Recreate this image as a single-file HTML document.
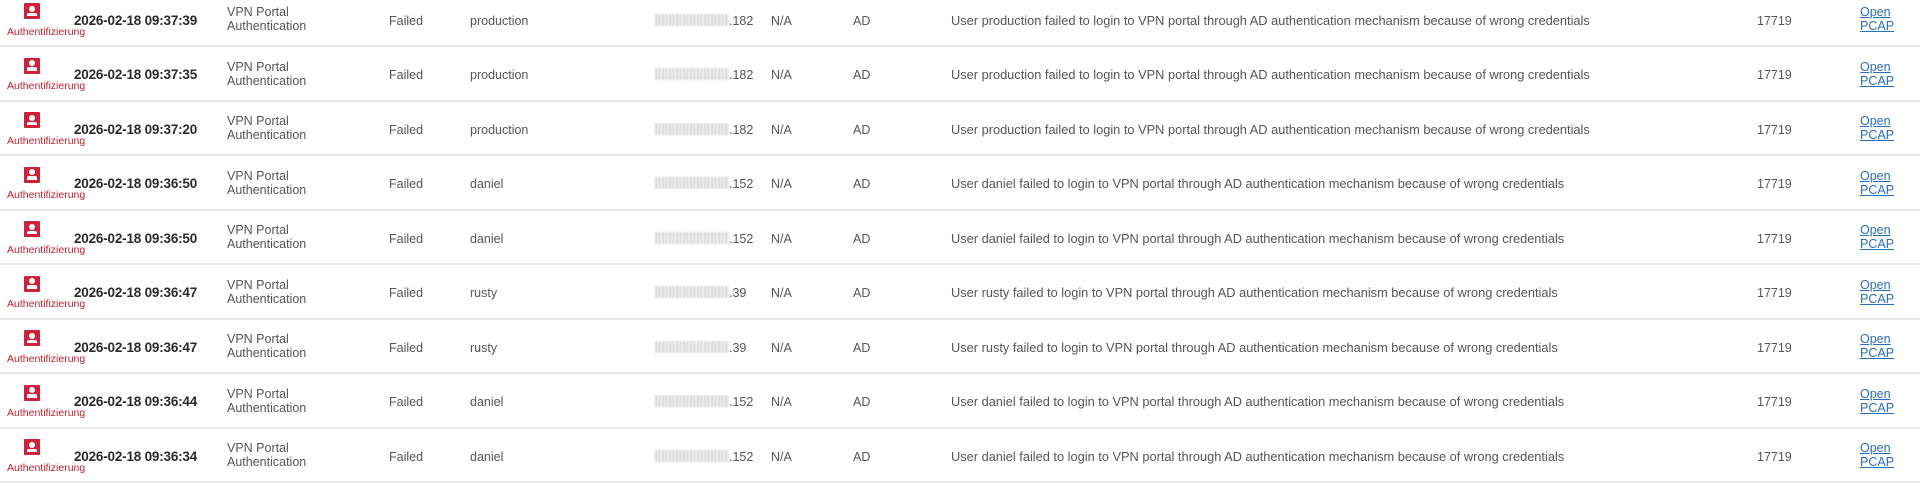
<!DOCTYPE html>
<html><head><meta charset="utf-8"><style>
body{margin:0;width:1920px;height:477px;overflow:hidden;background:#fff;font-family:"Liberation Sans",sans-serif;position:relative}
.r{position:absolute;left:0;width:1920px;height:54.5px;border-bottom:2px solid #e9e9e9;box-sizing:border-box}
.r>*{position:absolute;white-space:nowrap}
.ic{left:24px;top:10.5px;width:16px;height:16px;background:#d0213a;border-radius:1px}
.ic::before{content:"";position:absolute;left:5px;top:2.5px;width:6px;height:6px;border-radius:50%;background:#fff}
.ic::after{content:"";position:absolute;left:3px;top:9.5px;width:10px;height:3.5px;background:#fff;border-radius:2px 2px 0 0}
.au{left:7px;top:33px;font-size:10.5px;color:#c8202f}
.dt{left:74px;top:20px;font-size:13.5px;color:#2a2a2a;font-weight:bold;letter-spacing:-0.2px}
.t{font-size:12.5px;color:#555;top:21px}
.m{font-size:12.8px;top:20px}
.vp{left:227px;top:12.5px;font-size:12.5px;color:#555;line-height:14px}
.ip{left:655px;top:21px;font-size:12.5px;color:#555}
.bl{display:inline-block;width:74px;height:12px;vertical-align:-1px;background:repeating-linear-gradient(90deg,#d8d8d8 0 2px,#eee 2px 4px,#c9c9c9 4px 5px,#f2f2f2 5px 7px);filter:blur(0.8px)}
.lk{left:1860px;top:12.5px;font-size:12.5px;color:#2a6ebb;text-decoration:underline;line-height:14px}
</style></head><body>
<div id="c"></div>
<script>
var d=[["09:37:39","production","182"],["09:37:35","production","182"],["09:37:20","production","182"],["09:36:50","daniel","152"],["09:36:50","daniel","152"],["09:36:47","rusty","39"],["09:36:47","rusty","39"],["09:36:44","daniel","152"],["09:36:34","daniel","152"]];
var h="";
d.forEach(function(x,i){
h+='<div class="r" style="top:'+(-7.5+54.5*i)+'px"><div class="ic"></div><div class="au">Authentifizierung</div><div class="dt">2026-02-18 '+x[0]+'</div><div class="vp">VPN Portal<br>Authentication</div><div class="t" style="left:389px">Failed</div><div class="t" style="left:470px">'+x[1]+'</div><div class="ip"><span class="bl"></span>.'+x[2]+'</div><div class="t" style="left:771px">N/A</div><div class="t" style="left:853px">AD</div><div class="t m" style="left:951px">User '+x[1]+' failed to login to VPN portal through AD authentication mechanism because of wrong credentials</div><div class="t" style="left:1757px">17719</div><div class="lk">Open<br>PCAP</div></div>';
});
document.getElementById("c").innerHTML=h;
</script>
</body></html>
